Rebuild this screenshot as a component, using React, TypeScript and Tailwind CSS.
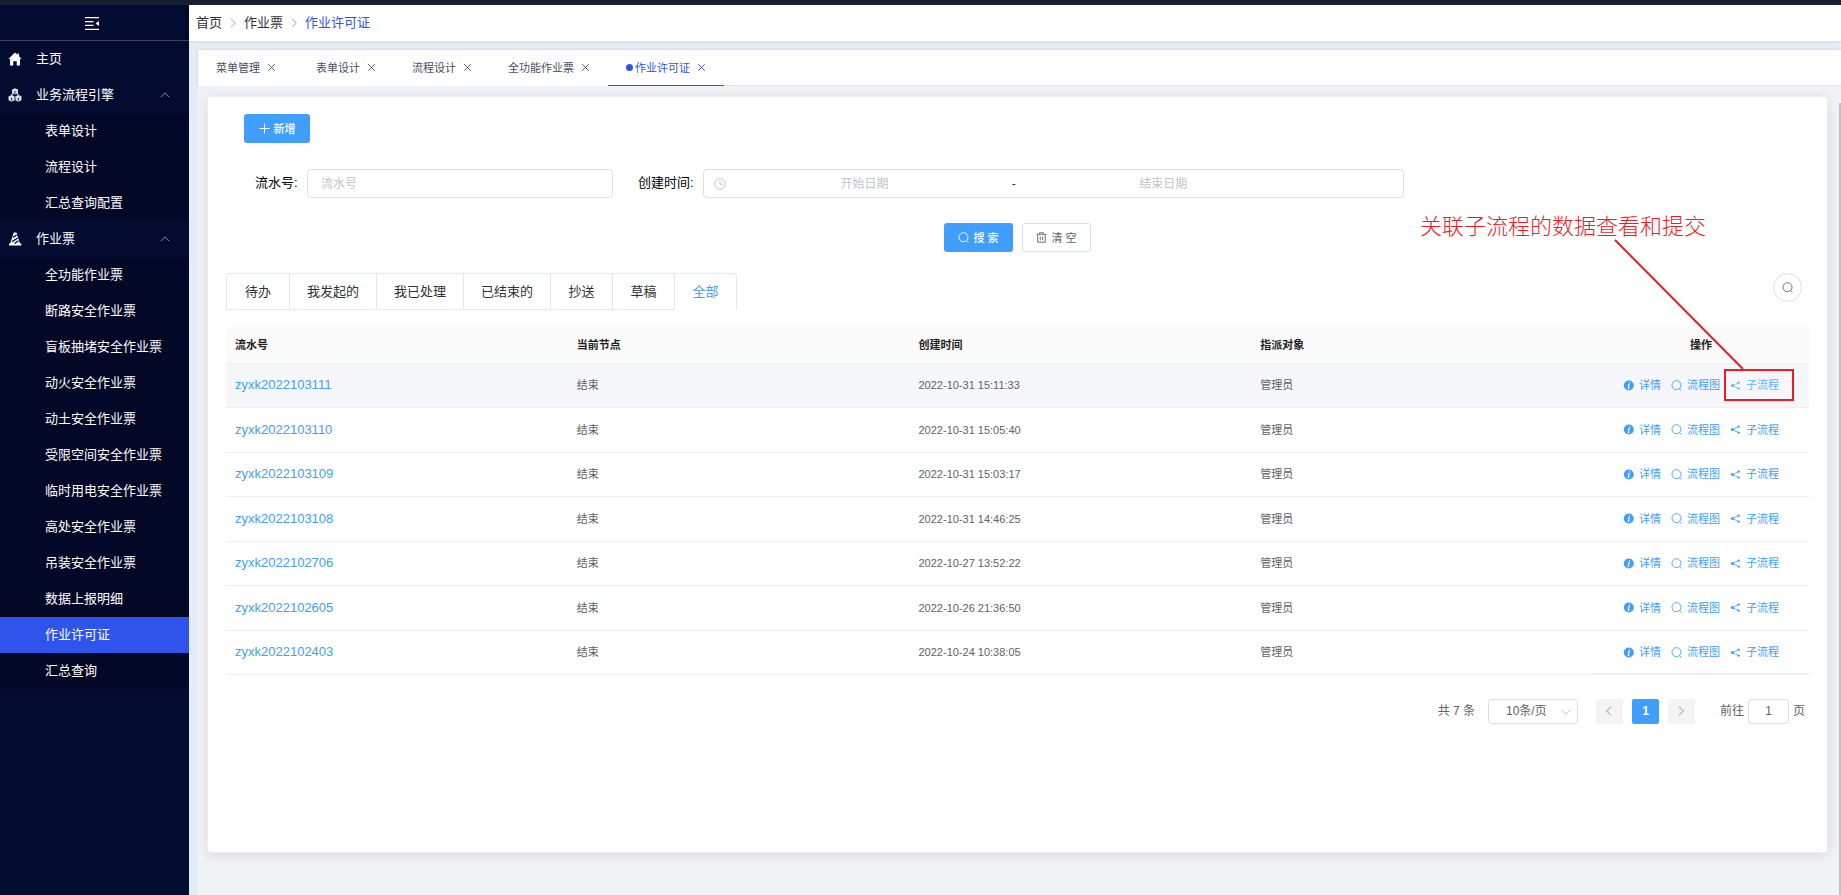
import React, { useState, ReactNode } from 'react';
import clsx from 'clsx';

interface MenuGroup {
  title: string;
  icon: ReactNode;
  children: string[];
}

const HomeIcon = () => (
  <svg viewBox="0 0 14 14" className="w-[14px] h-[14px]" fill="currentColor">
    <path d="M7 0.4 0.3 7H2v6.6h3.3V9.2h3.4v4.4H12V7h1.7L11 4.3V1.4H9.4v1.3z" />
  </svg>
);

const CubesIcon = () => (
  <svg viewBox="0 0 14 14" className="w-[14px] h-[14px]" fill="currentColor" opacity="0.85">
    <path d="M7 0.3 10 1.6v3.6L7 6.6 4 5.2V1.6z" />
    <path d="M3.6 7 6.6 8.2v4l-3 1.5-3.1-1.5v-4z" />
    <path d="M10.4 7l3.1 1.2v4l-3.1 1.5-3-1.5v-4z" />
    <path d="M4.6 5.5 3.4 7.6M9.4 5.5l1.2 2.1" stroke="currentColor" strokeWidth="1.2" />
    <path d="M7 3.2v2.4M3.6 10v2.6M10.4 10v2.6" stroke="#030b30" strokeWidth="0.9" fill="none" />
  </svg>
);

const ConeIcon = () => (
  <svg viewBox="0 0 14 14" className="w-[14px] h-[14px]" fill="currentColor">
    <path d="M5.8 0.5h2.6L12 11.6h1.3v1.9H1v-1.9h1.2z" />
    <path d="M5 5.4 8.6 3M4 9.6 9.8 6M6.6 11.4l4-2.6" stroke="#030b30" strokeWidth="1.3" fill="none" />
  </svg>
);

const FoldIcon = () => (
  <svg viewBox="0 0 14 13" className="w-[14px] h-[13px]" stroke="currentColor" strokeWidth="1.2" fill="none">
    <path d="M0 0.7h14M0 4.6h8.6M0 8.4h8.6M0 12.3h14" />
    <path d="M14 3.9v5.2L10.6 6.5z" fill="currentColor" stroke="none" />
  </svg>
);

const SearchIcon = () => (
  <svg viewBox="0 0 11 11" className="w-[11px] h-[11px] shrink-0" stroke="currentColor" strokeWidth="0.9" fill="none">
    <circle cx="5.5" cy="5.2" r="4.5" />
    <path d="M8.3 8.5 10.4 10.4" />
  </svg>
);

const TrashIcon = () => (
  <svg viewBox="0 0 11 11" className="w-[11px] h-[11px] shrink-0" stroke="currentColor" strokeWidth="0.9" fill="none">
    <path d="M0.6 2.3h9.8M3.6 2.2V0.8h3.8v1.4M1.7 2.5v7.7h7.6V2.5M4.3 4.4v3.9M6.7 4.4v3.9" />
  </svg>
);

const InfoIcon = () => (
  <svg viewBox="0 0 11 11" className="w-[11px] h-[11px] shrink-0">
    <circle cx="5.8" cy="5.5" r="5" fill="currentColor" />
    <path d="M6.5 2.2v1.2M4.9 4.8h1.2L5.3 8.4h1" stroke="#fff" strokeWidth="1.1" fill="none" />
  </svg>
);

const ShareIcon = () => (
  <svg viewBox="0 0 11 11" className="w-[11px] h-[11px] shrink-0" fill="currentColor">
    <circle cx="2.4" cy="5.6" r="1.5" />
    <circle cx="8.7" cy="2.6" r="1.2" />
    <circle cx="8.7" cy="8.6" r="1.2" />
    <path d="M8.7 2.6 2.4 5.6l6.3 3" stroke="currentColor" strokeWidth="0.8" fill="none" />
  </svg>
);

const PlusIcon = () => (
  <svg viewBox="0 0 11 11" className="w-[11px] h-[11px] shrink-0" stroke="currentColor" fill="none">
    <path d="M5.5 0.5v10M0.5 5.5h10" />
  </svg>
);

const CloseIcon = () => (
  <svg viewBox="0 0 9 9" className="w-[9px] h-[9px]" stroke="currentColor" strokeWidth="0.9" fill="none">
    <path d="M1.2 1.2 7.8 7.8M7.8 1.2 1.2 7.8" />
  </svg>
);

const ClockIcon = () => (
  <svg viewBox="0 0 12 12" className="w-3 h-3 shrink-0" stroke="currentColor" fill="none">
    <circle cx="6" cy="6" r="5.3" />
    <path d="M6 3v3.2h2.8" />
  </svg>
);

// Thin arrow, points right unless rotated by the caller
const Arrow = ({ className, weight = 1 }: { className?: string; weight?: number }) => (
  <svg viewBox="0 0 12 12" className={clsx('w-3 h-3 shrink-0', className)} stroke="currentColor" strokeWidth={weight} fill="none">
    <path d="M4 1.8 8.2 6 4 10.2" />
  </svg>
);

const menu: MenuGroup[] = [
  {
    title: '业务流程引擎',
    icon: <CubesIcon />,
    children: ['表单设计', '流程设计', '汇总查询配置'],
  },
  {
    title: '作业票',
    icon: <ConeIcon />,
    children: [
      '全功能作业票',
      '断路安全作业票',
      '盲板抽堵安全作业票',
      '动火安全作业票',
      '动土安全作业票',
      '受限空间安全作业票',
      '临时用电安全作业票',
      '高处安全作业票',
      '吊装安全作业票',
      '数据上报明细',
      '作业许可证',
      '汇总查询',
    ],
  },
];

const pages = ['菜单管理', '表单设计', '流程设计', '全功能作业票', '作业许可证'];
const statuses = ['待办', '我发起的', '我已处理', '已结束的', '抄送', '草稿', '全部'];

const rows = [
  { no: 'zyxk2022103111', time: '2022-10-31 15:11:33' },
  { no: 'zyxk2022103110', time: '2022-10-31 15:05:40' },
  { no: 'zyxk2022103109', time: '2022-10-31 15:03:17' },
  { no: 'zyxk2022103108', time: '2022-10-31 14:46:25' },
  { no: 'zyxk2022102706', time: '2022-10-27 13:52:22' },
  { no: 'zyxk2022102605', time: '2022-10-26 21:36:50' },
  { no: 'zyxk2022102403', time: '2022-10-24 10:38:05' },
];

function Sidebar() {
  const [active, setActive] = useState('作业许可证');

  return (
    <nav className="w-[189px] shrink-0 bg-[#030b30] text-white text-[13px]">
      <div className="h-9 flex items-center justify-center pt-0.5 pr-[5px] border-b border-[#3a4060]">
        <button aria-label="折叠菜单">
          <FoldIcon />
        </button>
      </div>
      <a href="#home" className="h-9 flex items-center gap-[14px] pl-2">
        <HomeIcon />
        主页
      </a>
      {menu.map((group) => (
        <div key={group.title}>
          <button className="w-full h-9 flex items-center gap-[14px] pl-2 pr-[18px]">
            {group.icon}
            {group.title}
            <Arrow className="-rotate-90 ml-auto text-[#8b90a3]" />
          </button>
          <ul className="bg-[#020825]">
            {group.children.map((item) => (
              <li key={item}>
                <a
                  href="#menu"
                  onClick={() => setActive(item)}
                  className={clsx('h-9 flex items-center pl-[45px]', item === active && 'bg-[#2f54eb]')}
                >
                  {item}
                </a>
              </li>
            ))}
          </ul>
        </div>
      ))}
    </nav>
  );
}

function PageTabs() {
  const [active, setActive] = useState('作业许可证');

  return (
    <div className="h-9 flex bg-white border-b border-[#dfe4ed] text-[11px] text-[#495060] shadow-[0_0_3px_rgba(0,0,0,0.12)]">
      {pages.map((page) => (
        <div
          key={page}
          className={clsx(
            'h-9 flex items-center pl-[18px] border-b',
            page === active ? 'text-[#2f54eb] border-[#2f54eb]' : 'border-white',
            page === pages[0] ? 'pr-[22px]' : 'pr-[18px]',
          )}
        >
          <button onClick={() => setActive(page)} className="flex items-center gap-0.5">
            {page === active && <span className="w-[7px] h-[7px] rounded-full bg-[#2f54eb]"></span>}
            {page}
          </button>
          <button className="ml-[7px]" aria-label={`关闭${page}`}>
            <CloseIcon />
          </button>
        </div>
      ))}
    </div>
  );
}

function SearchForm() {
  return (
    <form onSubmit={(e) => e.preventDefault()} className="text-[13px] text-black">
      <div className="flex items-center mt-[26px] pl-[29px]">
        <label htmlFor="serial" className="w-[52px] pb-0.5 whitespace-nowrap">流水号:</label>
        <input
          id="serial"
          placeholder="流水号"
          className="w-[306px] h-[29px] px-[13px] text-[12px] border border-[#dcdfe6] rounded placeholder:text-[#c0c4cc] outline-none"
        />
        <label htmlFor="start" className="w-[90px] pl-[25px] pb-0.5 whitespace-nowrap">创建时间:</label>
        <div className="w-[701px] h-[29px] px-[10px] flex items-center text-[12px] border border-[#dcdfe6] rounded text-[#c0c4cc]">
          <ClockIcon />
          <input id="start" placeholder="开始日期" className="w-[39%] ml-1.5 text-center placeholder:text-[#c0c4cc] outline-none" />
          <span className="w-[5%] text-center text-[#303133]">-</span>
          <input aria-label="结束日期" placeholder="结束日期" className="w-[39%] text-center placeholder:text-[#c0c4cc] outline-none" />
        </div>
      </div>
      <div className="flex justify-center gap-[9px] mt-[25px] text-[11px]">
        <button className="w-[69px] h-[29px] flex items-center justify-center gap-1 rounded-[3px] bg-[#409eff] text-white font-medium">
          <SearchIcon />
          搜 索
        </button>
        <button type="reset" className="w-[69px] h-[29px] flex items-center justify-center gap-1 rounded-[3px] border border-[#dcdfe6] text-[#606266]">
          <TrashIcon />
          清 空
        </button>
      </div>
    </form>
  );
}

function StatusTabs() {
  const [active, setActive] = useState('全部');

  return (
    <div className="flex items-start justify-between mt-[21px] pr-[7px]">
      <div className="flex border border-b-0 border-[#e4e7ed] rounded-t text-[13px] text-[#303133]">
        {statuses.map((status, i) => (
          <button
            key={status}
            onClick={() => setActive(status)}
            className={clsx(
              'h-9 border-b',
              status.length > 2 ? 'w-[87px]' : 'w-[62px]',
              i > 0 && 'border-l border-l-[#e4e7ed]',
              status === active ? 'text-[#409eff] border-b-transparent' : 'border-b-[#e4e7ed]',
            )}
          >
            {status}
          </button>
        ))}
      </div>
      <button className="w-[29px] h-[29px] flex items-center justify-center rounded-full border border-[#dcdfe6] text-[#606266]" aria-label="显示搜索">
        <SearchIcon />
      </button>
    </div>
  );
}

function DataTable() {
  return (
    <table className="w-full mt-[17px] table-fixed border-collapse text-left text-[11px] text-[#606266]">
      <thead>
        <tr className="h-9 bg-[#fafafa] text-[#1f1f1f] border-b border-[#ebeef5]">
          <th className="pl-[9px]">流水号</th>
          <th className="pl-[9px]">当前节点</th>
          <th className="pl-[9px]">创建时间</th>
          <th className="pl-[9px]">指派对象</th>
          <th className="w-[216px] text-center">操作</th>
        </tr>
      </thead>
      <tbody>
        {rows.map((row, i) => (
          <tr
            key={row.no}
            className={clsx('h-[44px] even:h-[45px] border-b border-[#ebeef5]', i === 0 && 'bg-[#f5f7fa]')}
          >
            <td className="pl-[9px]">
              <a href="#detail" className="text-[13px] text-[#409eff]">{row.no}</a>
            </td>
            <td className="pl-[9px]">结束</td>
            <td className="pl-[9px]">{row.time}</td>
            <td className="pl-[9px]">管理员</td>
            <td className={clsx(i === rows.length - 1 && 'shadow-[inset_0_-1px_0_#ebeef5]')}>
              <div className="flex justify-center gap-[10px] text-[#409eff]">
                <button className="flex items-center gap-[5px]"><InfoIcon />详情</button>
                <button className="flex items-center gap-[5px]"><SearchIcon />流程图</button>
                <button className={clsx('flex items-center gap-[5px]', i === 0 && 'text-[#66b1ff]')}><ShareIcon />子流程</button>
              </div>
            </td>
          </tr>
        ))}
      </tbody>
    </table>
  );
}

function Pagination() {
  return (
    <div className="flex items-center justify-end mt-6 pr-1 text-[12px] text-[#606266]">
      <span>共 7 条</span>
      <div className="relative ml-[13px]">
        <select aria-label="每页条数" className="w-[90px] h-[25px] pl-[17px] appearance-none border border-[#dcdfe6] rounded-[3px] outline-none">
          <option>10条/页</option>
        </select>
        <Arrow className="absolute right-[6px] top-[7px] rotate-90 text-[#c0c4cc] pointer-events-none" />
      </div>
      <button className="w-[27px] h-[25px] ml-[18px] flex items-center justify-center rounded-[2px] bg-[#f4f4f5] text-[#c0c4cc]" aria-label="上一页">
        <Arrow className="rotate-180" weight={1.6} />
      </button>
      <button className="w-[27px] h-[25px] ml-[9px] rounded-[2px] bg-[#409eff] text-white font-bold">1</button>
      <button className="w-[27px] h-[25px] ml-[9px] flex items-center justify-center rounded-[2px] bg-[#f4f4f5] text-[#c0c4cc]" aria-label="下一页">
        <Arrow weight={1.6} />
      </button>
      <label htmlFor="jump" className="ml-[25px]">前往</label>
      <input id="jump" defaultValue="1" className="w-[41px] h-[25px] mx-[4px] text-center border border-[#dcdfe6] rounded-[3px] outline-none" />
      <span>页</span>
    </div>
  );
}

// Red note pointing at the sub-process action of the first row
function Callout() {
  return (
    <div className="absolute top-[114px] right-[33px] w-[374px] h-[190px] pointer-events-none">
      <p className="text-[22px] leading-[32px] font-light text-[#ed1c24] whitespace-nowrap">关联子流程的数据查看和提交</p>
      <svg viewBox="0 0 374 190" className="absolute inset-0 w-full h-full" stroke="#ed1c24" fill="none">
        <path d="M195 29 323 158" strokeWidth="2" />
        <rect x="305" y="159" width="68" height="30" strokeWidth="2" />
      </svg>
    </div>
  );
}

export default function App() {
  return (
    <div className="min-h-screen flex flex-col bg-[#e4ecf7] font-['Liberation_Sans','Noto_Sans_CJK_SC',sans-serif] leading-[18px]">
      <div className="h-[5px] bg-[#191e33]"></div>
      <div className="flex flex-1">
        <Sidebar />
        <div className="flex-1 min-w-0 flex flex-col">
          <header className="h-9 flex items-center gap-[5px] pl-[7px] bg-white text-[13px] text-[#303133] shadow-[0_1px_4px_rgba(0,21,41,0.08)]">
            <a href="#home">首页</a>
            <Arrow className="text-[#c0c4cc]" weight={1.2} />
            <a href="#ticket">作业票</a>
            <Arrow className="text-[#c0c4cc]" weight={1.2} />
            <span className="text-[#2f54eb]">作业许可证</span>
          </header>
          <div className="flex-1 flex flex-col mt-[9px] ml-[9px]">
            <PageTabs />
            <div className="flex-1 flex bg-[#f0f2f5]">
              <div className="flex-1 min-w-0 pt-[10px] pl-[9px] pr-[11px] pb-[42px] flex">
                <main className="relative flex-1 px-[18px] pt-[17px] bg-white border border-[#ebeef5] rounded shadow-[0_2px_12px_rgba(0,0,0,0.1)]">
                  <button className="w-[66px] h-[29px] ml-[18px] flex items-center justify-center gap-1 rounded-[3px] bg-[#409eff] text-white text-[11px] font-medium">
                    <PlusIcon />
                    新增
                  </button>
                  <SearchForm />
                  <StatusTabs />
                  <DataTable />
                  <Pagination />
                  <Callout />
                </main>
              </div>
              <div className="w-0.5 mt-[17px] bg-[#c1c1c1]"></div>
            </div>
          </div>
        </div>
      </div>
    </div>
  );
}
